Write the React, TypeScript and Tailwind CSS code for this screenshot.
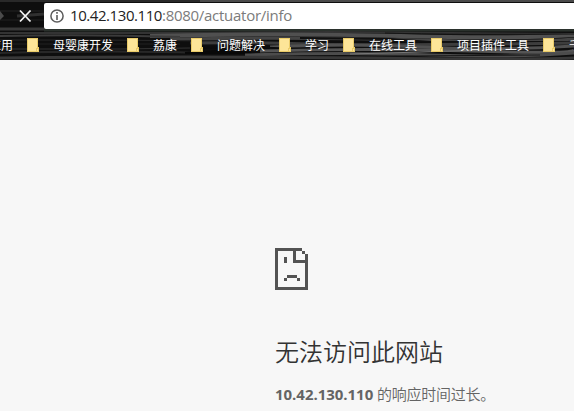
import React from "react";

const strokes = [
  ["M44 30H574", 3, "#2b322d"],
  ["M0 33H200L330 32L574 34", 2, "#333333"],
  ["M150 36Q280 33 400 36T574 35", 4, "#505050"],
  ["M0 36Q90 34 180 37", 2, "#3b3b3b"],
  ["M170 39Q310 37 420 40T574 39", 3, "#444444"],
  ["M385 33Q450 35 574 34", 1, "#151515"],
  ["M300 38L390 39L430 42H574", 2, "#101010"],
  ["M0 40H100L220 41", 1, "#292929"],
  ["M190 43Q250 42 310 44T574 43", 3, "#3d3d3d"],
  ["M0 44H180", 1, "#202020"],
  ["M270 47Q350 43 420 47T574 46", 3, "#505050"],
  ["M190 48L250 47L300 49", 2, "#0c0c0c"],
  ["M0 49H120L190 48", 1, "#333333"],
  ["M260 51Q370 48 470 51T574 50", 3, "#555555"],
  ["M0 53Q120 50 200 53", 2, "#272727"],
  ["M185 53L236 50L250 53Z", 2, "#080808"],
  ["M245 55Q350 52 430 55T574 53", 3, "#4c4c4c"],
  ["M350 54Q430 52 510 49", 1, "#777777"],
  ["M340 57L410 56L540 55", 1, "#171717"],
  ["M0 58Q200 56 360 58T574 58", 3, "#383838"],
  ["M0 1H574", 2, "#292929"],
  ["M200 1H574", 2, "#4b4b4b"],
  ["M0 11H44", 2, "#181818"],
  ["M17 16L44 14", 3, "#303030"],
  ["M0 20H44", 1, "#202020"],
  ["M0 29H44", 3, "#393939"],
] as const;

const bookmarks = [
  { label: "母婴康开发", icon: 27 },
  { label: "荔康", icon: 127 },
  { label: "问题解决", icon: 191 },
  { label: "学习", icon: 279 },
  { label: "在线工具", icon: 343 },
  { label: "项目插件工具", icon: 431 },
  { label: "千", icon: 543 },
];

function Folder() {
  return (
    <svg className="h-[14px] w-3 shrink-0" viewBox="0 0 12 14" shapeRendering="crispEdges">
      <path fill="#fde598" d="M0 0h11v10h1v4H0z" />
      <path fill="none" stroke="#eacb68" d="M.5 13.5V.5h10v9h1v4H.5M9.5 13.5v-3h2" />
    </svg>
  );
}

export default function App() {
  return (
    <main className="h-[411px] w-[574px] overflow-hidden bg-[#f7f7f7] font-['Open_Sans','Noto_Sans_CJK_SC',sans-serif]">
      <header className="relative flex h-[60px] flex-col overflow-hidden bg-[#0e0e0e]">
        <svg className="absolute inset-0 h-[60px] w-[574px]" viewBox="0 0 574 60" fill="none">
          {strokes.map(([d, width, color]) => (
            <path key={d + color} d={d} stroke={color} strokeWidth={width} />
          ))}
        </svg>
        <div className="relative flex h-[29px] pt-[3px]">
          <svg className="h-[26px] w-11 shrink-0" viewBox="0 3 44 26">
            <path d="M0 11 4 16 0 20z" fill="#4b4b4b" />
            <path d="m20 10.5 10.5 11m0-11L20 21.5" fill="none" stroke="#f4f4f4" strokeWidth="1.8" />
          </svg>
          <div className="flex h-[26px] grow items-center rounded-l-[2px] bg-white pl-[6px]">
            <svg className="h-[14px] w-[14px] shrink-0" viewBox="0 0 14 14">
              <circle cx="7" cy="7" r="6.1" fill="none" stroke="#5b5b5b" strokeWidth="1.5" />
              <path d="M6.2 3h1.6v1.7H6.2zM6.2 6h1.6v5H6.2z" fill="#5b5b5b" />
            </svg>
            <div className="mb-[2px] ml-[6px] flex whitespace-nowrap text-[15px] leading-[24px]">
              <span className="w-[92px] tracking-[-0.43px] text-[#222]">10.42.130.110</span>
              <span className="tracking-[-0.28px] text-[#7b7b7b]">:8080/actuator/info</span>
            </div>
          </div>
        </div>
        <nav className="relative flex h-[31px] pt-[9px] font-['Noto_Sans_CJK_SC',sans-serif] text-[12px] leading-[14px] text-white">
          <span className="w-[27px] shrink-0 -indent-[11px] whitespace-nowrap">应用</span>
          {bookmarks.map((b, i) => (
            <div key={b.label} className="flex shrink-0 gap-[14px]" style={{ width: (bookmarks[i + 1]?.icon ?? 600) - b.icon }}>
              <Folder />
              <span className="whitespace-nowrap">{b.label}</span>
            </div>
          ))}
        </nav>
      </header>
      <section className="pl-[275px] pt-[188px]">
        <svg className="h-[42px] w-[33px]" viewBox="0 0 33 42" shapeRendering="crispEdges">
          <path fill="#535353" d="M0 0h27v3h3v3h3v36H0zM3 3v36h27V15H18V3zM21 3v9h9V6h-3V3zM9 9h3v6H9zM12 27h10v3H12zM9 30h3v3H9zM22 30h3v3h-3z" fillRule="evenodd" />
        </svg>
        <h1 className="mt-[43px] whitespace-nowrap font-['Noto_Sans_CJK_SC',sans-serif] text-[24px] font-[350] leading-[36px] text-[#333]">无法访问此网站</h1>
        <p className="mt-[14px] whitespace-nowrap text-[15px] leading-[22px] tracking-[-0.03px] text-[#646464]">
          <strong>10.42.130.110</strong> <span className="font-[350] tracking-[-0.25px]">的响应时间过长。</span>
        </p>
      </section>
    </main>
  );
}
